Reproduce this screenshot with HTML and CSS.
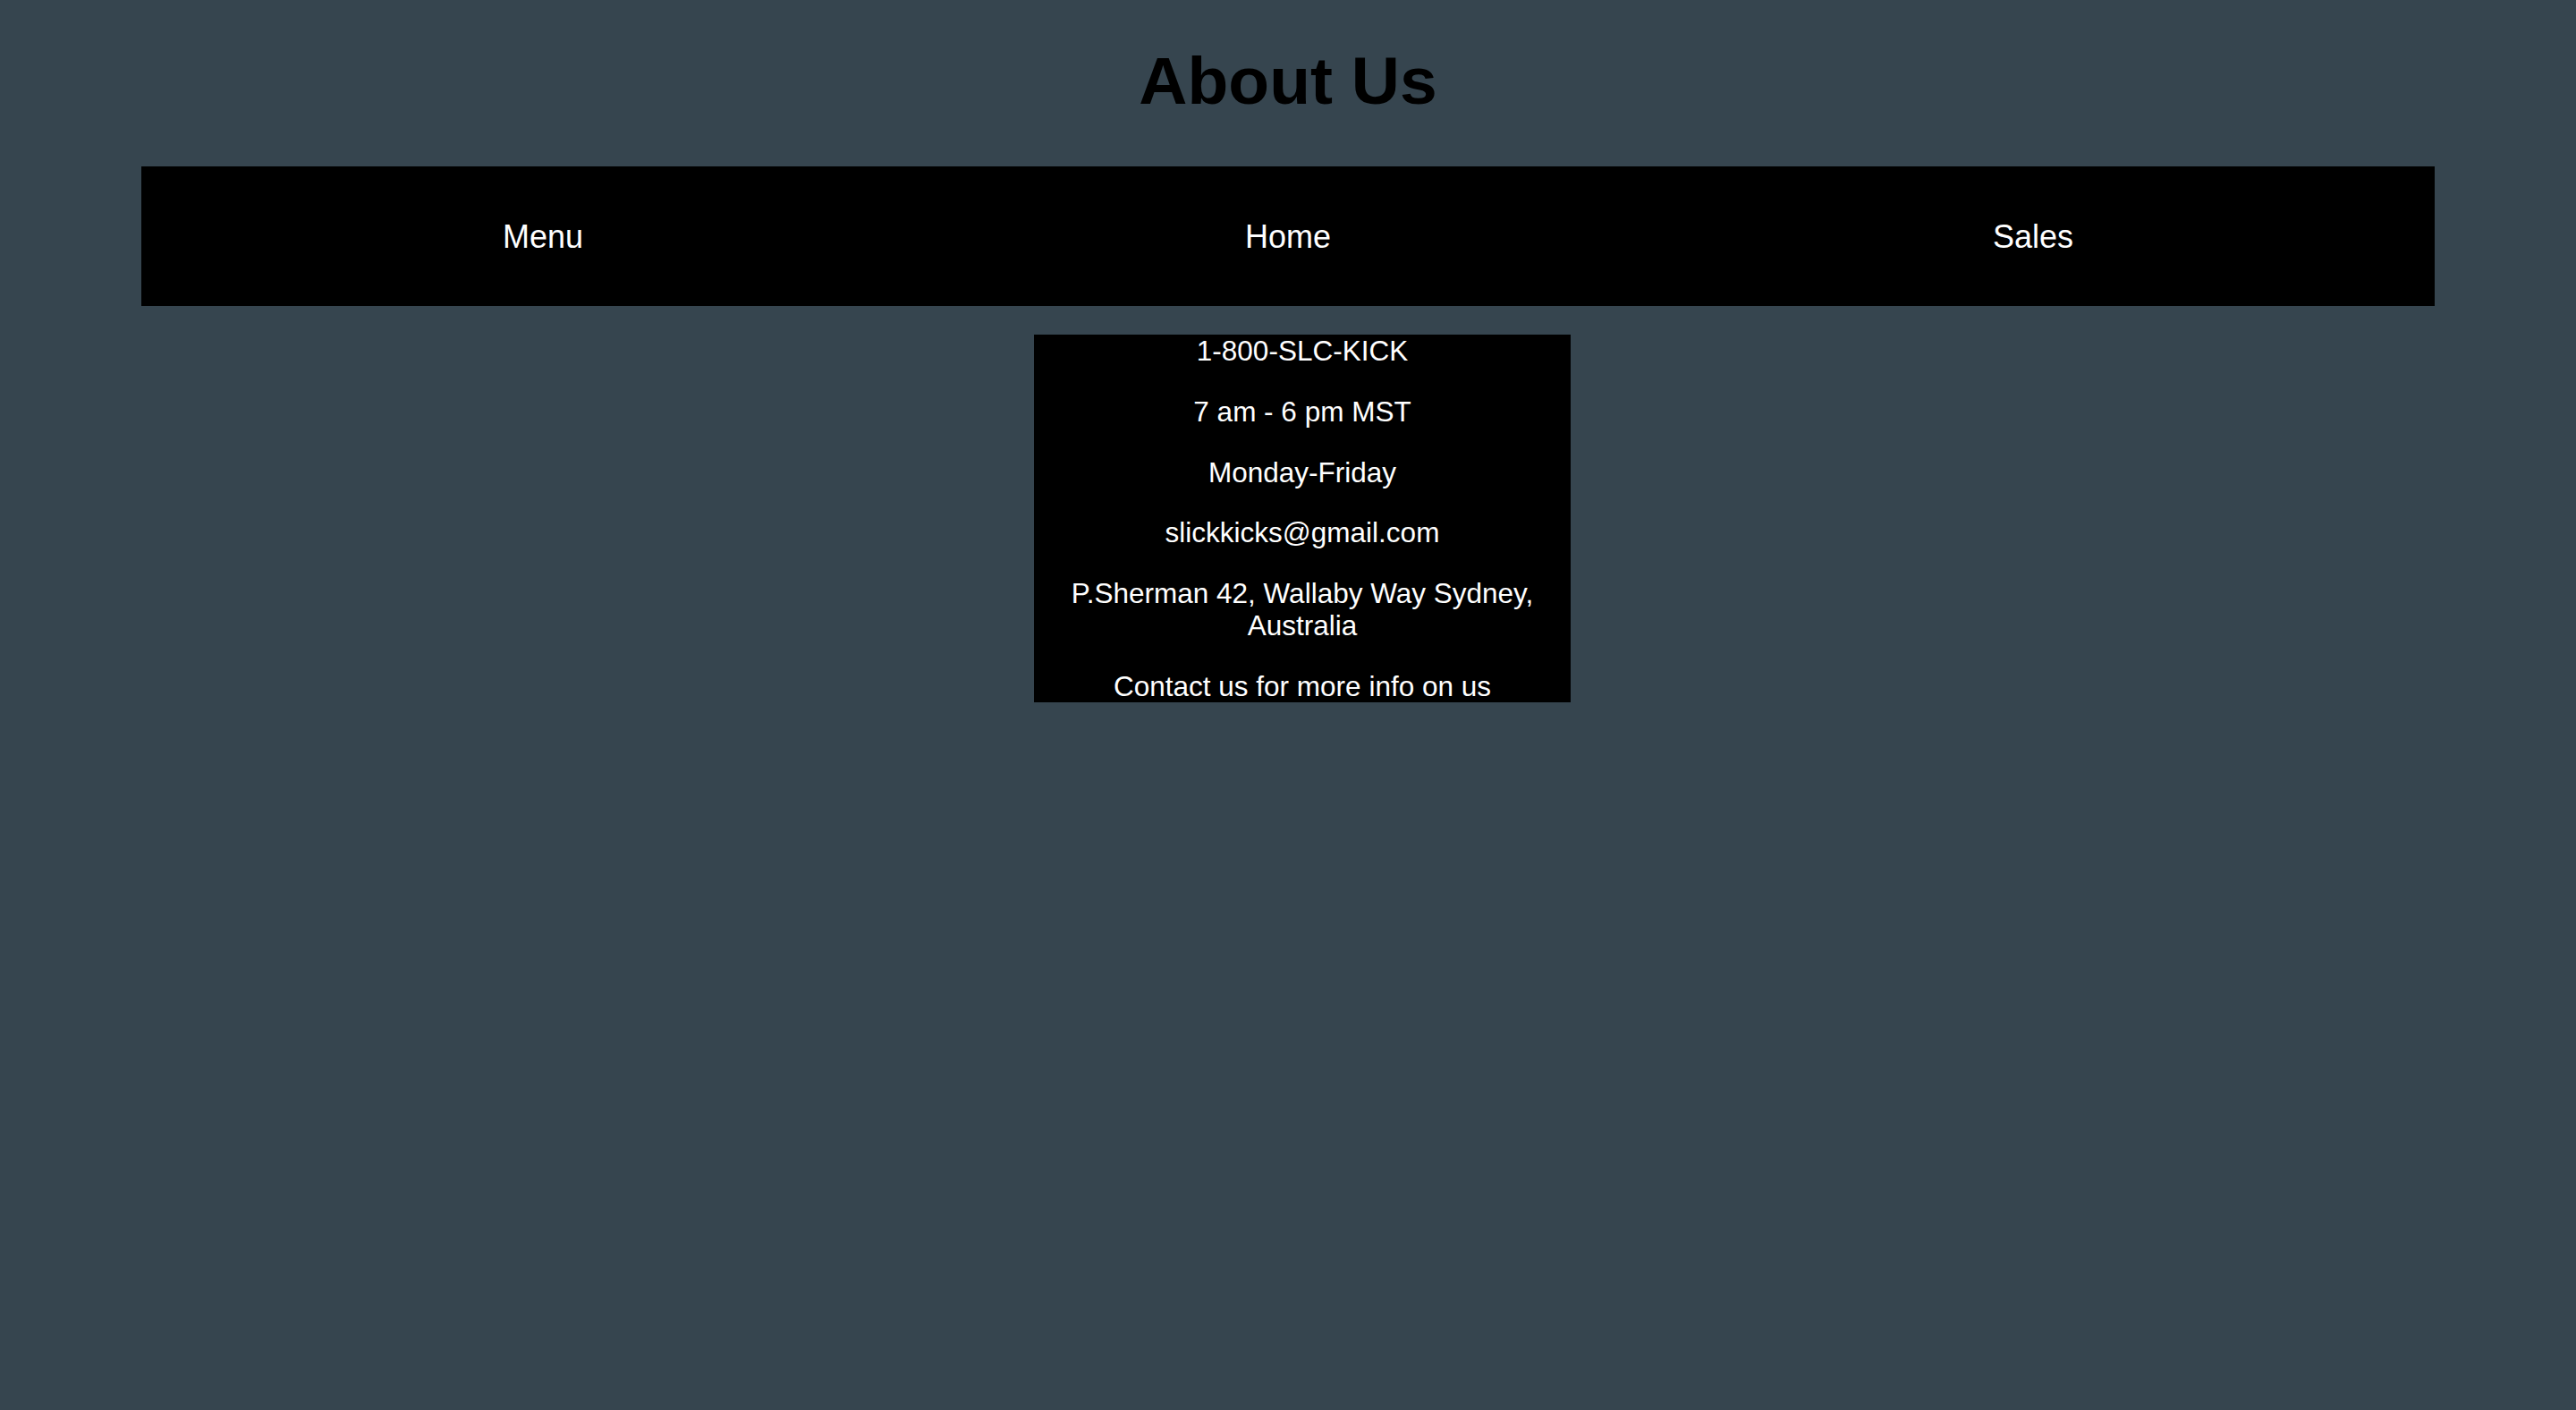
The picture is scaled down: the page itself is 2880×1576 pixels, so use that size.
FILE: index.html
```html
<!DOCTYPE html>
<html lang="en">
<head>
<meta charset="utf-8">
<title>About Us</title>
<link rel="stylesheet" href="styles.css">
</head>
<body>
<header class="page-header">
  <h1 class="title">About Us</h1>
</header>
<nav class="nav">
  <a class="nav-item" href="#">Menu</a>
  <a class="nav-item" href="#">Home</a>
  <a class="nav-item" href="#">Sales</a>
</nav>
<main class="main">
  <section class="contact">
    <p>1-800-SLC-KICK</p>
    <p>7 am - 6 pm MST</p>
    <p>Monday-Friday</p>
    <p>slickkicks@gmail.com</p>
    <p>P.Sherman 42, Wallaby Way Sydney, Australia</p>
    <p>Contact us for more info on us</p>
  </section>
</main>
</body>
</html>
```

FILE: styles.css
```css
html, body {
  margin: 0;
  padding: 0;
}
body {
  background: #36454f;
  font-family: "Liberation Sans", Arial, sans-serif;
  min-height: 1576px;
}
.page-header {
  padding-top: 47px;
  display: flex;
  justify-content: center;
}
.title {
  margin: 0;
  font-size: 75px;
  line-height: 1.15;
  font-weight: bold;
  color: #000;
}
.nav {
  width: 89%;
  margin: 53px auto 0;
  height: 156px;
  background: #000;
  display: flex;
  justify-content: center;
  align-items: center;
}
.nav-item {
  width: 833px;
  text-align: center;
  color: #fff;
  text-decoration: none;
  font-size: 36px;
  line-height: 1.15;
}
.main {
  padding-left: 32px;
  padding-top: 32px;
}
.contact {
  width: 600px;
  margin: 0 auto;
  background: #000;
  color: #fff;
  display: flex;
  flex-direction: column;
  gap: 31.5px;
  text-align: center;
  font-size: 31.5px;
  line-height: 1.15;
}
.contact p {
  margin: 0;
}
```
